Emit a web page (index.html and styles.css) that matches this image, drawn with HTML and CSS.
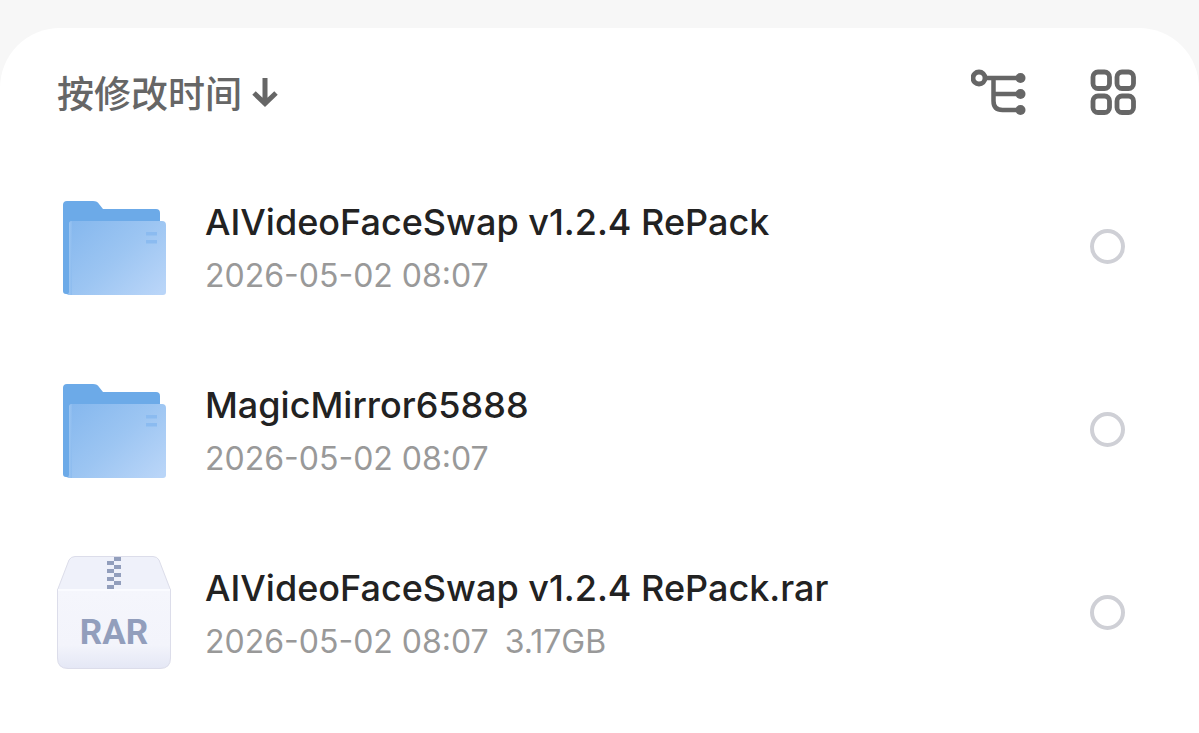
FILE: index.html
```html
<!DOCTYPE html>
<html lang="zh-CN">
<head>
    <meta charset="UTF-8">
    <meta name="viewport" content="width=device-width, initial-scale=1.0">
    <title>文件列表</title>
    <link rel="stylesheet" href="styles.css">
</head>
<body>
    <!-- shared folder icon -->
    <svg class="defs" width="0" height="0" aria-hidden="true">
        <defs>
            <linearGradient id="folder-front" x1="0" y1="0.1" x2="1" y2="0.9">
                <stop offset="0" stop-color="#86b8ee"/>
                <stop offset="0.5" stop-color="#9cc5f2"/>
                <stop offset="1" stop-color="#b9d5f8"/>
            </linearGradient>
            <linearGradient id="folder-edge" x1="0" y1="0" x2="1" y2="0">
                <stop offset="0" stop-color="#a5cbf4"/>
                <stop offset="1" stop-color="#8dbcef"/>
            </linearGradient>
            <symbol id="folder" viewBox="0 -2 114 114">
                <path fill="#6caae8" d="M6 13a4 4 0 0 1 4-4h26c3 0 5 1 6 3l4 5h53a4 4 0 0 1 4 4v81H9a3 3 0 0 1-3-3z"/>
                <path fill="url(#folder-front)" d="M12 32a3 3 0 0 1 3-3h90a4 4 0 0 1 4 4v67a3 3 0 0 1-3 3H9a3 3 0 0 0 3-3z"/>
                <path fill="url(#folder-edge)" d="M12 32a3 3 0 0 1 3-3v74h-5a3 3 0 0 0 2-3z"/>
                <path fill="#8bbbf0" d="M89 40h11v3.500H89zM89 48h11v3.500H89z"/>
            </symbol>
        </defs>
    </svg>

    <main class="panel">
        <header class="toolbar">
            <button class="sort" type="button">
                <span>按修改时间</span>
                <svg class="arrow" viewBox="0 0 26 30" aria-hidden="true">
                    <path d="M13 1v26M2 16L13 26.500 24 16"/>
                </svg>
            </button>
            <div class="actions">
                <button type="button" aria-label="目录树">
                    <svg class="tree-icon" viewBox="0 0 56 48" aria-hidden="true">
                        <g fill="none" stroke="#666" stroke-width="4.500">
                            <circle cx="8" cy="10" r="6" stroke-width="4.800"/>
                            <path d="M15 10h34M22.500 10v23q0 9 9 9h17M22.500 26h26"/>
                        </g>
                        <g fill="#666">
                            <circle cx="49.500" cy="10" r="5"/>
                            <circle cx="49.500" cy="26" r="5"/>
                            <circle cx="49.500" cy="42" r="5"/>
                        </g>
                    </svg>
                </button>
                <button type="button" aria-label="宫格视图">
                    <svg class="grid-icon" viewBox="0 0 48 48" aria-hidden="true">
                        <g fill="none" stroke="#666" stroke-width="4.800">
                            <rect x="4" y="4" width="16.500" height="16.500" rx="5"/>
                            <rect x="28" y="4" width="16.500" height="16.500" rx="5"/>
                            <rect x="4" y="28" width="16.500" height="16.500" rx="5"/>
                            <rect x="28" y="28" width="16.500" height="16.500" rx="5"/>
                        </g>
                    </svg>
                </button>
            </div>
        </header>

        <ul class="files">
            <li>
                <label class="file">
                    <svg class="file-icon" aria-hidden="true"><use href="#folder"/></svg>
                    <span class="info">
                        <span class="name">AIVideoFaceSwap v1.2.4 RePack</span>
                        <span class="meta"><span>2026-05-02 08:07</span></span>
                    </span>
                    <input class="check" type="checkbox">
                </label>
            </li>
            <li>
                <label class="file">
                    <svg class="file-icon" aria-hidden="true"><use href="#folder"/></svg>
                    <span class="info">
                        <span class="name">MagicMirror65888</span>
                        <span class="meta"><span>2026-05-02 08:07</span></span>
                    </span>
                    <input class="check" type="checkbox">
                </label>
            </li>
            <li>
                <label class="file">
                    <svg class="file-icon" viewBox="0 1 114 114" aria-hidden="true">
                        <defs>
                            <linearGradient id="box-front" x1="0" y1="0" x2="0" y2="1">
                                <stop offset="0" stop-color="#f5f6fc"/>
                                <stop offset="0.7" stop-color="#f3f4fb"/>
                                <stop offset="1" stop-color="#e4e7f5"/>
                            </linearGradient>
                        </defs>
                        <path fill="#eff1fa" stroke="#dcddea" d="M0.500 35L12 5q2-3.500 6-3.500h78q4 0 6 3.500l11.500 30z"/>
                        <path fill="url(#box-front)" stroke="#dcddea" d="M0.500 35h113v68q0 10.500-10.500 10.500H11Q0.500 113.500 0.500 103z"/>
                        <path stroke="#fafbff" stroke-width="2" d="M1 35h112"/>
                        <g fill="#929ebc">
                            <path d="M57 2h7v4h-7zM57 10h7v4h-7zM57 18h7v4h-7zM57 26h7v4h-7z"/>
                            <path d="M50 6h7v4h-7zM50 14h7v4h-7zM50 22h7v4h-7zM50 30h7v4h-7z"/>
                        </g>
                        <text class="type" x="57" y="89" text-anchor="middle">RAR</text>
                    </svg>
                    <span class="info">
                        <span class="name">AIVideoFaceSwap v1.2.4 RePack.rar</span>
                        <span class="meta"><span>2026-05-02 08:07</span><span>3.17GB</span></span>
                    </span>
                    <input class="check" type="checkbox">
                </label>
            </li>
        </ul>
    </main>
</body>
</html>
```
FILE: styles.css
```css
* {
    box-sizing: border-box;
}
body {
    margin: 0;
    padding-top: 28px;
    min-height: 100vh;
    display: flex;
    background: #f7f7f7;
    font-family: Inter, "Noto Sans CJK SC", sans-serif;
    color: #222;
}
.defs {
    position: absolute;
}
.panel {
    flex: 1;
    min-width: 0;
    background: #fff;
    border-radius: 60px 60px 0 0;
}
button {
    display: flex;
    align-items: center;
    padding: 0;
    border: 0;
    background: none;
    font: inherit;
    color: #666;
    cursor: pointer;
}

.toolbar {
    display: flex;
    align-items: center;
    justify-content: space-between;
    height: 127px;
    padding: 0 62px 0 57px;
}
.sort {
    gap: 10px;
    font-family: "Noto Sans CJK SC", sans-serif;
    font-size: 37px;
    font-weight: 500;
    line-height: 52px;
}
.arrow {
    width: 26px;
    height: 30px;
    fill: none;
    stroke: #666;
    stroke-width: 5;
}
.actions {
    display: flex;
    gap: 62px;
}
.tree-icon {
    width: 56px;
    height: 48px;
}
.grid-icon {
    width: 48px;
    height: 48px;
}

.files {
    margin: 0;
    padding: 0;
    list-style: none;
}
.file {
    display: flex;
    align-items: center;
    gap: 34px;
    height: 183px;
    padding: 0 74px 0 57px;
}
.file-icon {
    flex: none;
    width: 114px;
    height: 114px;
    overflow: visible;
}
.type {
    font-family: Roboto, sans-serif;
    font-size: 35px;
    font-weight: 700;
    fill: #929ebc;
}
.info {
    flex: 1;
    min-width: 0;
    padding-top: 2px;
}
.name {
    display: block;
    font-size: 36px;
    font-weight: 500;
    line-height: 56px;
}
.meta {
    display: flex;
    gap: 16px;
    font-size: 32px;
    line-height: 52px;
    color: #999;
}
.check {
    appearance: none;
    flex: none;
    width: 35px;
    height: 35px;
    margin: 0;
    border: 4px solid #cfd0d6;
    border-radius: 50%;
}
.check:checked {
    background: #6caae8;
}
```
